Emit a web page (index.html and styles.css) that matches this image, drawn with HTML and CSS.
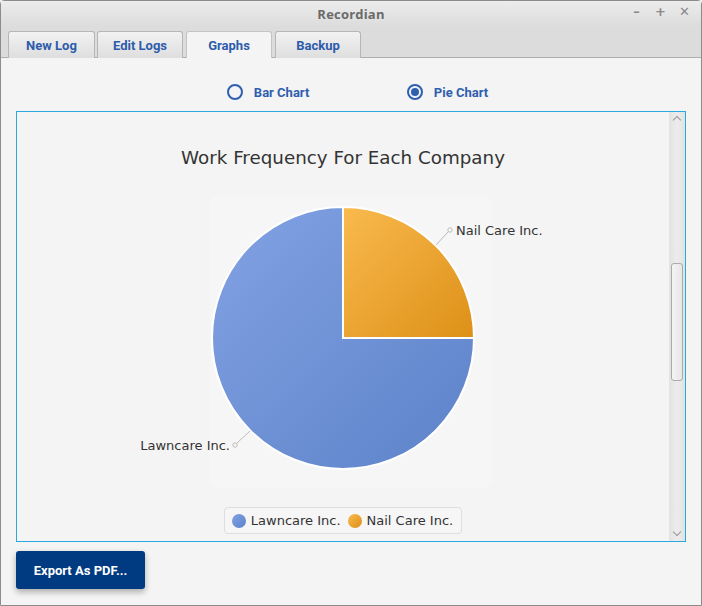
FILE: index.html
```html
<!DOCTYPE html>
<html>
<head>
<meta charset="utf-8">
<link rel="stylesheet" href="styles.css">
</head>
<body>
<div class="window">
  <div class="titlebar">
    <span class="title">Recordian</span>
    <div class="controls">
      <span class="ctl">&#8211;</span>
      <span class="ctl">+</span>
      <span class="ctl">&#10005;</span>
    </div>
  </div>
  <div class="tabbar">
    <div class="tab">New Log</div>
    <div class="tab">Edit Logs</div>
    <div class="tab active">Graphs</div>
    <div class="tab">Backup</div>
  </div>
  <div class="content">
    <div class="radios">
      <label class="radio"><span class="dot"></span>Bar Chart</label>
      <label class="radio checked"><span class="dot"></span>Pie Chart</label>
    </div>
    <div class="pane">
      <div class="chart">
        <div class="chart-title">Work Frequency For Each Company</div>
        <svg class="plot" width="652" height="330" viewBox="0 0 652 330">
          <defs>
            <linearGradient id="gBlue" x1="0" y1="0" x2="1" y2="1">
              <stop offset="0" stop-color="#82a2e3"/>
              <stop offset="1" stop-color="#5d82c9"/>
            </linearGradient>
            <linearGradient id="gOrange" x1="0" y1="0" x2="1" y2="1">
              <stop offset="0" stop-color="#f9ba4e"/>
              <stop offset="1" stop-color="#dd9017"/>
            </linearGradient>
          </defs>
          <rect x="193" y="26" width="282" height="292" rx="8" fill="#f6f6f6"/>
          <path d="M326,168 L457,168 A131,131 0 1 1 326,37 Z" fill="url(#gBlue)" stroke="#fff" stroke-width="2"/>
          <path d="M326,168 L326,37 A131,131 0 0 1 457,168 Z" fill="url(#gOrange)" stroke="#fff" stroke-width="2"/>
          <line x1="419" y1="75" x2="431" y2="62" stroke="#bbb" stroke-width="1"/>
          <circle cx="433" cy="60" r="2.2" fill="none" stroke="#bbb" stroke-width="1"/>
          <text x="439" y="65" class="lbl">Nail Care Inc.</text>
          <line x1="233" y1="261" x2="220" y2="273" stroke="#bbb" stroke-width="1"/>
          <circle cx="218" cy="275" r="2.2" fill="none" stroke="#bbb" stroke-width="1"/>
          <text x="213" y="280" class="lbl" text-anchor="end">Lawncare Inc.</text>
        </svg>
        <div class="legend">
          <span class="item"><span class="sw blue"></span>Lawncare Inc.</span>
          <span class="item"><span class="sw orange"></span>Nail Care Inc.</span>
        </div>
      </div>
      <div class="scrollbar">
        <div class="arrow up"></div>
        <div class="track"><div class="thumb"></div></div>
        <div class="arrow down"></div>
      </div>
    </div>
    <div class="actions">
      <button class="export">Export As PDF...</button>
    </div>
  </div>
</div>
</body>
</html>
```
FILE: styles.css
```css
* { box-sizing: border-box; }
html, body { margin: 0; padding: 0; }
body { width: 702px; height: 606px; background: #f4f4f4; overflow: hidden; }
.window {
  width: 702px; height: 606px;
  border: 1px solid #8c8c8c;
  border-radius: 4px 4px 0 0;
  background: #f4f4f4;
  display: flex; flex-direction: column;
  font-family: Roboto, "Liberation Sans", sans-serif;
}
.titlebar {
  height: 26px;
  background: linear-gradient(#ececec, #dcdcdc);
  position: relative;
  display: flex; align-items: center; justify-content: center;
}
.title { font-family: "Open Sans", "DejaVu Sans", sans-serif; font-weight: 700; font-size: 13px; color: #6a6a6a; letter-spacing: 0.2px; }
.controls { position: absolute; right: 10px; top: 3px; display: flex; gap: 11px; }
.ctl { font-family: "DejaVu Sans", sans-serif; font-weight: 700; color: #8a8a8a; font-size: 13px; width: 13px; text-align: center; }
.tabbar {
  height: 31px;
  background: #dcdcdc;
  border-bottom: 1px solid #aeaeae;
  display: flex; align-items: flex-end;
  padding-left: 7px; gap: 2px;
}
.tab {
  width: 87px; height: 27px;
  border: 1px solid #b6b6b6; border-bottom: none;
  border-radius: 3px 3px 0 0;
  background: linear-gradient(#f2f2f2, #dedede);
  color: #2d5cab; font-weight: 700; font-size: 13px;
  display: flex; align-items: center; justify-content: center;
  margin-bottom: -1px;
}
.tab + .tab { width: 86px; }
.tab.active { background: #f4f4f4; height: 27px; border-color: #c4c4c4; margin-left: 1px; }
.tab.active + .tab { margin-left: 1px; }
.content { flex: 1; display: flex; flex-direction: column; padding: 0 15px; }
.radios { height: 53px; display: flex; align-items: flex-start; justify-content: center; padding-top: 26px; padding-left: 13px; }
.radio { display: flex; align-items: center; color: #2f5fae; font-weight: 700; font-size: 13px; width: 180px; height: 16px; }
.radio:last-child { width: auto; }
.dot { width: 16px; height: 16px; border: 2px solid #2f5fae; border-radius: 50%; margin-right: 11px; display: flex; align-items: center; justify-content: center; flex: none; }
.checked .dot::after { content: ""; width: 8px; height: 8px; border-radius: 50%; background: #2f5fae; }
.pane {
  height: 431px;
  border: 1px solid #2aa8df;
  display: flex;
  background: #f4f4f4;
}
.chart { flex: 1; display: flex; flex-direction: column; align-items: center; padding-top: 34px; }
.chart-title { font-family: "DejaVu Sans", sans-serif; font-size: 18.3px; line-height: 24px; color: #333; }
.plot { display: block; }
.lbl { font-family: "DejaVu Sans", sans-serif; font-size: 13px; fill: #333; }
.legend {
  margin-top: 7px; height: 27px;
  border: 1px solid #dedede; border-radius: 4px; background: #f6f6f6;
  display: flex; align-items: center; gap: 7px; padding: 0 8px 0 7px;
  font-family: "DejaVu Sans", sans-serif; font-size: 13px; color: #333;
}
.item { display: flex; align-items: center; gap: 5px; }
.sw { width: 14px; height: 14px; border-radius: 50%; }
.sw.blue { background: linear-gradient(135deg, #82a2e3, #5d82c9); }
.sw.orange { background: linear-gradient(135deg, #f9ba4e, #dd9017); }
.scrollbar { width: 16px; background: linear-gradient(90deg, #e2e2e2, #ececec, #e2e2e2); display: flex; flex-direction: column; }
.arrow { height: 14px; position: relative; }
.arrow::after { content: ""; position: absolute; left: 5px; width: 5px; height: 5px; border-left: 1px solid #999; border-top: 1px solid #999; }
.arrow.up::after { top: 5px; transform: rotate(45deg); }
.arrow.down::after { top: 2px; transform: rotate(225deg); }
.track { flex: 1; padding-top: 137px; display: flex; justify-content: center; }
.thumb { width: 12px; height: 118px; border: 1px solid #ababab; border-radius: 3px; background: linear-gradient(90deg, #f4f4f4, #e6e6e6); }
.actions { padding-top: 9px; }
.export {
  width: 129px; height: 38px;
  background: #003b82; color: #fff; border: none; border-radius: 3px;
  font-family: Roboto, "Liberation Sans", sans-serif; font-weight: 700; font-size: 13px;
  box-shadow: 0 3px 6px rgba(0,0,0,0.3);
  padding: 0;
}
```
